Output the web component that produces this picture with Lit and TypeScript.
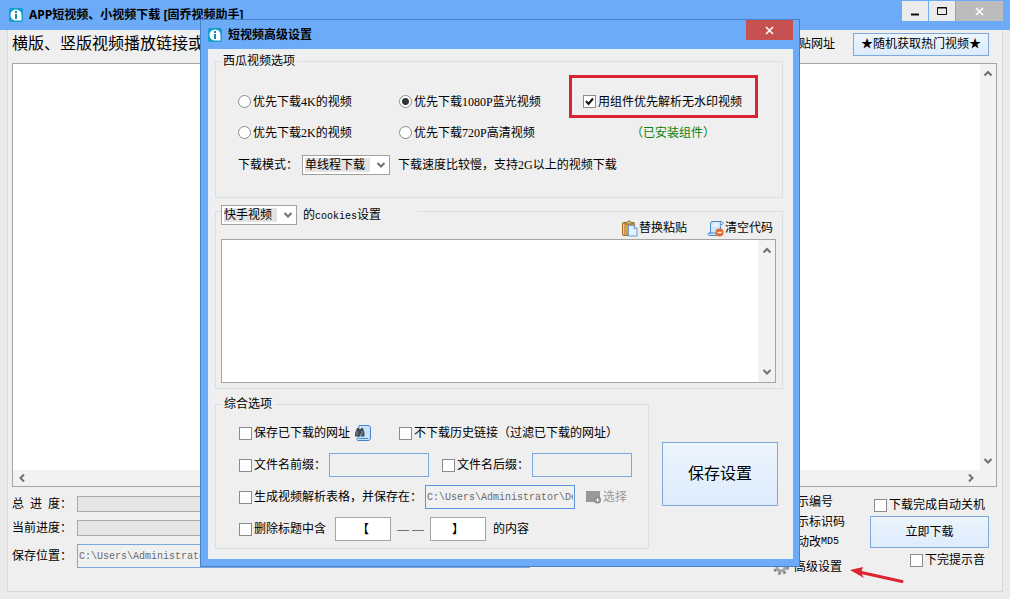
import { LitElement, html, css, svg } from "lit";
import { customElement, property } from "lit/decorators.js";

const base = css`
  :host { font: 12px/16px "Liberation Serif", "Noto Sans CJK SC", sans-serif; color: #000; }
  * { box-sizing: border-box; }
  button, input, select, textarea { font: inherit; color: inherit; margin: 0; border-radius: 0; outline: none; }
  svg { display: block; flex: none; }
  label { display: inline-flex; align-items: center; white-space: nowrap; }
  input[type="checkbox"], input[type="radio"] {
    appearance: none; flex: none; width: 13px; height: 13px; margin-right: 2px;
    border: 1px solid #8c8c8c; background: #fff;
  }
  input[type="radio"] { border-radius: 50%; }
  input[type="radio"]:checked { background: radial-gradient(circle, #333 0 3px, #fff 4px); }
  input[type="checkbox"]:checked {
    background: #fff url("data:image/svg+xml,%3Csvg xmlns='http://www.w3.org/2000/svg' viewBox='0 0 11 11'%3E%3Cpath d='M2 5.2L4.5 8 9 2.5' fill='none' stroke='%23111' stroke-width='2'/%3E%3C/svg%3E") center / 11px 11px no-repeat;
  }
  .mono { font: 10px/16px "Liberation Mono", monospace; }
  .primary {
    display: flex; align-items: center; justify-content: center; padding: 0;
    border: 1px solid #7fa9de; background: linear-gradient(#edf5fd, #dcebfc); white-space: nowrap;
  }
  .plain { display: flex; align-items: center; padding: 0; border: 0; background: none; white-space: nowrap; }
  .path { padding: 0 1px; border: 1px solid #7ba7df; background: #f0f0f0; color: #6b6b6b; height: 24px; min-width: 0; }
`;

const logo = svg`<svg width="14" height="14" viewBox="0 0 14 14">
  <rect width="14" height="14" rx="2" fill="#11a0cf"/>
  <path d="M7 1.500a5.500 5.500 0 1 0 0 11h5.500V7A5.500 5.500 0 0 0 7 1.500z" fill="#fff"/>
  <rect x="6" y="3" width="2" height="2" fill="#1689b8"/>
  <path d="M6 6h2v5H6z" fill="#1689b8"/></svg>`;

const cross = svg`<svg width="9" height="9" viewBox="0 0 9 9"><path d="M1 1l7 7M8 1L1 8" stroke="#fff" stroke-width="1.600"/></svg>`;

const chevrons: Record<string, string> = {
  up: "M1.5 7.5L5 4l3.5 3.5",
  down: "M1.5 3L5 6.5L8.5 3",
  left: "M7 1.5L3.5 5L7 8.5",
  right: "M3 1.5L6.5 5L3 8.5",
};
const chevron = (dir: string) => svg`<svg width="10" height="10" viewBox="0 0 10 10">
  <path d=${chevrons[dir]} fill="none" stroke="#707070" stroke-width="2"/></svg>`;

@customElement("drop-down")
class DropDown extends LitElement {
  @property() label = "";
  @property() value = "";
  static styles = [base, css`
    :host { position: relative; display: block; height: 20px; background: #fff; border: 1px solid #a0a0a0; }
    select {
      display: block; appearance: none; width: 100%; height: 18px; padding: 0; border: 2px solid #fff;
      border-right-width: 19px; background: #e3e3e3; line-height: 14px;
    }
    .arrow { position: absolute; right: 3px; top: 4px; pointer-events: none; }
  `];
  render() {
    return html`<select aria-label=${this.label}><option>${this.value}</option></select>
      <span class="arrow">${chevron("down")}</span>`;
  }
}

@customElement("settings-dialog")
class SettingsDialog extends LitElement {
  static styles = [base, css`
    :host { display: block; background: #6babf7; border: 1px solid #4a7fc4; padding: 0 6px 7px 7px; }
    header { display: flex; align-items: center; height: 29px; gap: 6px; font-family: "Open Sans", "Noto Sans CJK SC", sans-serif; font-weight: bold; }
    header .close {
      margin-left: auto; align-self: flex-start; width: 47px; height: 20px; padding: 0; border: 0; background: #c75050;
      display: flex; align-items: center; justify-content: center;
    }
    .body { background: #efefef; border: 1px solid #e4f1fd; padding: 3px 9px 9px 6px; }
    fieldset { margin: 0; border: 1px solid #dadfe3; padding: 0; min-width: 0; }
    legend { margin-left: -17px; padding: 0 2px; height: 16px; }
    .xigua { padding: 17px 22px 15px; margin-bottom: 7px; }
    .choices { display: grid; grid-template-columns: 161px 184px 1fr; grid-auto-rows: 31px; align-items: center; }
    .choices label { justify-self: start; }
    .marked { position: relative; }
    .marked::after { content: ""; position: absolute; inset: -19px -16px -8px -14px; border: 3px solid #dc2330; pointer-events: none; }
    .ok { color: #0a8010; padding-left: 48px; }
    .mode { display: flex; align-items: center; height: 34px; }
    .mode drop-down { width: 88px; margin: 0 8px 0 4px; }
    .cookies { margin-bottom: 7px; padding: 0 6px 5px 5px; }
    .cookies legend { display: flex; align-items: flex-start; gap: 6px; height: 12px; width: 196px; padding: 0; margin-left: 0; }
    .cookies legend drop-down { width: 76px; }
    .cookies legend span { line-height: 20px; }
    .tools { display: flex; justify-content: flex-end; gap: 20px; height: 22px; padding-right: 3px; }
    .tools button { gap: 1px; }
    .code { display: flex; height: 144px; border: 1px solid #a5a5a5; background: #fff; }
    textarea { flex: 1; min-width: 0; border: 0; resize: none; overflow: hidden; background: none; }
    .track { width: 17px; background: #f2f2f2; display: flex; flex-direction: column; justify-content: space-between; align-items: center; padding: 5px 0; }
    .bottom { display: flex; align-items: flex-start; gap: 13px; }
    .general { width: 434px; padding: 5px 0 3px 23px; }
    .row { display: flex; align-items: center; height: 32px; }
    .row .find { margin: 0 28px 0 5px; }
    .field { width: 100px; height: 24px; border: 1px solid #7ba7df; background: #efefef; }
    .row .field { margin: 0 13px 0 3px; }
    .row .path { width: 150px; margin: 0 11px 0 3px; border-color: #5b95dd; }
    .mark { width: 56px; height: 24px; border: 1px solid #a5a5a5; background: #fff; text-align: center; padding: 0; }
    .dash { margin: 0 6px; }
    .first { padding-right: 9px; }
    .tail { margin-left: 7px; }
    .pick { color: #9a9a9a; gap: 1px; }
    .save { width: 116px; height: 64px; margin-top: 46px; font-size: 16px; }
  `];
  render() {
    return html`
      <header>${logo}<span>短视频高级设置</span><button class="close" aria-label="关闭">${cross}</button></header>
      <div class="body">
        <fieldset class="xigua">
          <legend>西瓜视频选项</legend>
          <div class="choices">
            <label><input type="radio" name="q">优先下载4K的视频</label>
            <label><input type="radio" name="q" checked>优先下载1080P蓝光视频</label>
            <label class="marked"><input type="checkbox" checked>用组件优先解析无水印视频</label>
            <label><input type="radio" name="q">优先下载2K的视频</label>
            <label><input type="radio" name="q">优先下载720P高清视频</label>
            <span class="ok">（已安装组件）</span>
          </div>
          <div class="mode"><span>下载模式：</span><drop-down label="下载模式" value="单线程下载"></drop-down>
            <span>下载速度比较慢，支持2G以上的视频下载</span></div>
        </fieldset>
        <fieldset class="cookies">
          <legend><drop-down label="视频网站" value="快手视频"></drop-down><span>的<span class="mono">cookies</span>设置</span></legend>
          <div class="tools">
            <button class="plain"><svg width="17" height="17" viewBox="0 0 17 17">
              <rect x="1.500" y="2.500" width="12" height="13" rx="1" fill="#d59a4c" stroke="#a86d25"/>
              <path d="M2.500 4v10" stroke="#f1c78a"/><path d="M4 4V2.500h2L7 1h2l1 1.500h2V4z" fill="#d9c27a" stroke="#7c6531" stroke-width=".8"/>
              <path d="M7.500 5.500h5.500l3 3v7.500H7.500z" fill="#e3f0fd" stroke="#6d9ccf"/><path d="M13 5.500v3h3" fill="#bcd8f5" stroke="#6d9ccf"/></svg>替换粘贴</button>
            <button class="plain"><svg width="17" height="17" viewBox="0 0 17 17">
              <path d="M5 1.500h9.500c-1.500.7-1 3-1 4v8c0 1.500-1 2-2 2h-9c-1.500 0-2-2-.5-2.500h1.500V4C3.500 2.500 4 1.500 5 1.500z" fill="#cfe6fb" stroke="#4d8ccb"/>
              <path d="M14.500 1.500c1.500 0 2 3 .5 3h-1.500M2 13h8" fill="none" stroke="#4d8ccb"/><path d="M6 4h5M6 6h5" stroke="#fff"/>
              <circle cx="12.500" cy="12.500" r="4" fill="#e4692b"/><path d="M10.500 12.500h4" stroke="#fff" stroke-width="1.500"/></svg>清空代码</button>
          </div>
          <div class="code"><textarea aria-label="cookies"></textarea><div class="track">${chevron("up")}${chevron("down")}</div></div>
        </fieldset>
        <div class="bottom">
          <fieldset class="general">
            <legend>综合选项</legend>
            <div class="row">
              <label><input type="checkbox">保存已下载的网址</label>
              <svg class="find" width="16" height="16" viewBox="0 0 16 16">
                <path d="M4 .5h9c2 0 2.500 1 2.500 2.500v10c0 1.500-1 2.500-2.500 2.500H3c-1.500 0-1.500-2 0-2.500z" fill="#c9e3fb" stroke="#4585cf"/>
                <path d="M4 13.500h9" stroke="#4585cf"/>
                <path d="M2 3h2v1h2V3h2l1.500 5v3.500h-4V9H5v2.500H0V8z" fill="#444c58"/><path d="M2 6v4M7 6v4" stroke="#8b96a6"/></svg>
              <label><input type="checkbox">不下载历史链接（过滤已下载的网址）</label>
            </div>
            <div class="row">
              <label><input type="checkbox">文件名前缀：</label><input class="field" aria-label="文件名前缀">
              <label><input type="checkbox">文件名后缀：</label><input class="field" aria-label="文件名后缀">
            </div>
            <div class="row">
              <label><input type="checkbox">生成视频解析表格，并保存在：</label>
              <input class="path mono" aria-label="表格保存位置" value="C:\\Users\\Administrator\\Desktop">
              <button class="plain pick" disabled><svg width="16" height="14" viewBox="0 0 16 14">
                <rect y="1" width="14" height="11" fill="#999"/><circle cx="11.500" cy="10" r="3.500" fill="#8a8a8a"/>
                <path d="M9.500 10h4M11.500 8v4" stroke="#fff"/></svg>选择</button>
            </div>
            <div class="row">
              <label class="first"><input type="checkbox">删除标题中含</label>
              <input class="mark" aria-label="开始符号" value="【"><span class="dash">— —</span><input class="mark" aria-label="结束符号" value="】">
              <span class="tail">的内容</span>
            </div>
          </fieldset>
          <button class="primary save">保存设置</button>
        </div>
      </div>`;
  }
}

@customElement("app-root")
class AppRoot extends LitElement {
  static styles = [base, css`
    :host { position: relative; display: flex; flex-direction: column; min-height: 100vh; background: #ebebeb; overflow: hidden; }
    .title { display: flex; align-items: center; height: 30px; padding: 0 7px 0 9px; gap: 6px; background: #6babf7; font-family: "Open Sans", "Noto Sans CJK SC", sans-serif; font-weight: bold; }
    .controls { display: flex; gap: 1px; margin-left: auto; align-self: flex-start; padding-top: 1px; }
    .controls button { display: flex; align-items: center; justify-content: center; width: 26px; height: 20px; padding: 0; border: 0; background: #ebebeb; }
    .controls .close { width: 47px; background: #bcbcbc; }
    .client { flex: 1; display: flex; flex-direction: column; margin: 0 7px 7px; padding: 0 5px 0 4px; background: #efefef; border: 1px solid #d8d8d8; border-top: 0; }
    .top { display: flex; align-items: center; height: 33px; padding: 0 8px 5px 0; }
    .top .lead { font-size: 16px; flex: 1; }
    .top .primary { width: 136px; height: 23px; margin-left: 18px; }
    .list { flex: 1; display: grid; grid-template: 1fr 16px / 1fr 16px; border: 1px solid #a5a5a5; background: #fff; }
    .list textarea { border: 0; resize: none; overflow: hidden; background: none; }
    .v, .h { display: flex; justify-content: space-between; align-items: center; background: #f2f2f2; }
    .v { flex-direction: column; padding: 4px 0; }
    .h { padding: 0 4px; }
    .corner { background: #f2f2f2; }
    .foot { display: flex; height: 104px; padding-right: 8px; }
    .status { flex: 1; display: grid; grid-template: 24px 24px 32px / 65px 1fr; align-items: center; align-content: start; padding: 5px 240px 0 0; }
    .spaced { display: flex; width: 60px; }
    .spaced span { width: 18px; }
    .bar { height: 16px; border: 1px solid #ababab; background: #e6e6e6; }
    .opts { display: flex; flex-direction: column; align-items: flex-start; width: 100px; padding-top: 5px; }
    .opts label { height: 20px; }
    .opts .plain { height: 30px; gap: 5px; margin-left: 3px; }
    .go { display: flex; flex-direction: column; align-items: flex-end; width: 119px; padding-top: 8px; }
    .go label { height: 20px; margin-right: 4px; }
    .go .primary { width: 100%; height: 32px; margin: 1px 0 2px; }
    settings-dialog { position: absolute; top: 19px; left: 200px; right: 210px; }
    .arrow { position: absolute; right: 106px; bottom: 15px; }
  `];
  render() {
    return html`
      <div class="title">${logo}<span>APP短视频、小视频下载 [固乔视频助手]</span>
        <div class="controls">
          <button aria-label="最小化"><svg width="9" height="9" viewBox="0 0 9 9"><path d="M0 7.500h8" stroke="#111" stroke-width="2"/></svg></button>
          <button aria-label="最大化"><svg width="10" height="8" viewBox="0 0 10 8"><path d="M.5.5h9v7h-9zM0 1h10" fill="none" stroke="#111"/></svg></button>
          <button class="close" aria-label="关闭">${cross}</button>
        </div>
      </div>
      <div class="client">
        <div class="top"><span class="lead">横版、竖版视频播放链接或</span><button class="plain">粘贴网址</button>
          <button class="primary">★随机获取热门视频★</button></div>
        <div class="list"><textarea aria-label="视频链接"></textarea>
          <div class="v">${chevron("up")}${chevron("down")}</div>
          <div class="h">${chevron("left")}${chevron("right")}</div><div class="corner"></div></div>
        <div class="foot">
          <div class="status">
            <span class="spaced"><span>总</span><span>进</span><span>度：</span></span><div class="bar"></div>
            <span>当前进度：</span><div class="bar"></div>
            <label for="dir">保存位置：</label><input id="dir" class="path mono" value="C:\\Users\\Administrator\\Desktop">
          </div>
          <div class="opts">
            <label><input type="checkbox">显示编号</label>
            <label><input type="checkbox">显示标识码</label>
            <label><input type="checkbox">自动改<span class="mono">MD5</span></label>
            <button class="plain"><svg width="16" height="16" viewBox="0 0 16 16">
              <circle cx="8" cy="8" r="6.500" fill="none" stroke="#8b8b8b" stroke-width="3" stroke-dasharray="2.600 2.505"/>
              <circle cx="8" cy="8" r="4" fill="none" stroke="#a3a3a3" stroke-width="3"/></svg>高级设置</button>
          </div>
          <div class="go">
            <label><input type="checkbox">下载完成自动关机</label>
            <button class="primary">立即下载</button>
            <label><input type="checkbox">下完提示音</label>
          </div>
        </div>
      </div>
      <settings-dialog></settings-dialog>
      <svg class="arrow" width="54" height="17" viewBox="0 0 54 17">
        <path d="M9 5L52 14.500" stroke="#dc2330" stroke-width="3" stroke-linecap="round"/><path d="M0 3L13 0L11 5.500L14 11z" fill="#dc2330"/></svg>`;
  }
}
